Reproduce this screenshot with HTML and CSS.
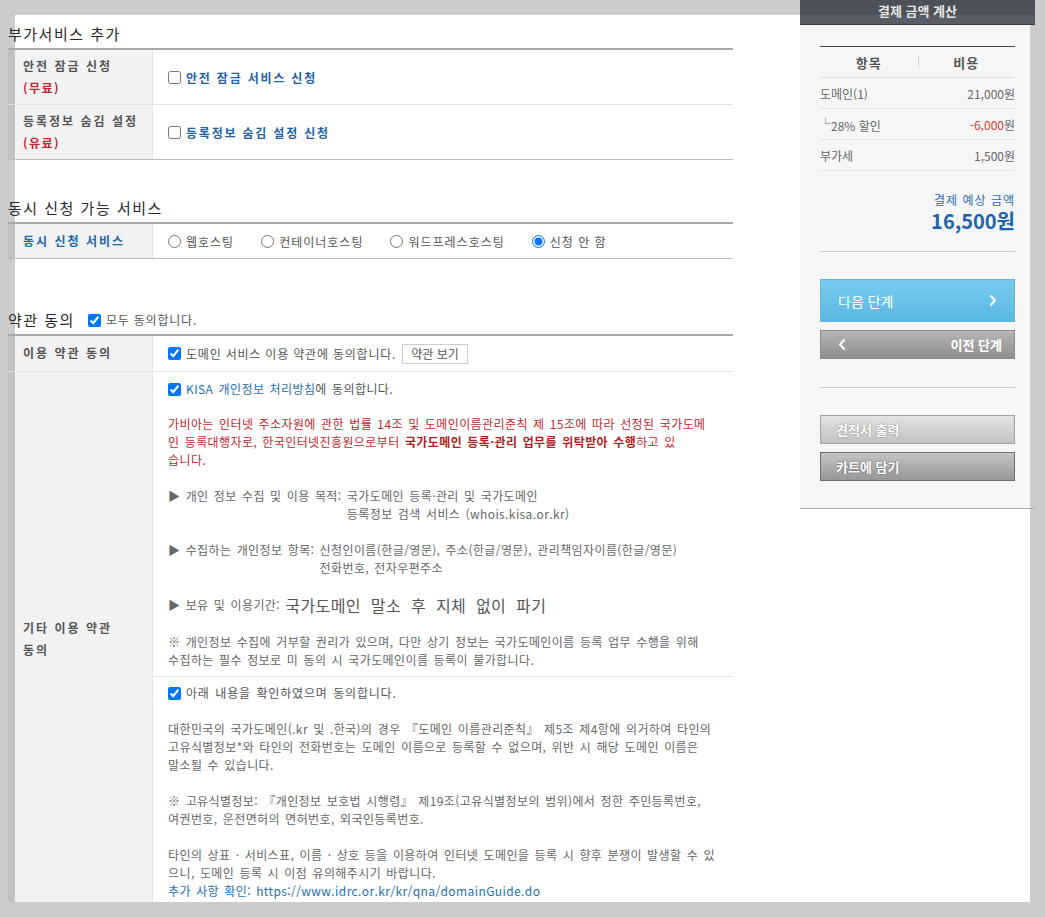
FILE: index.html
```html
<!DOCTYPE html>
<html lang="ko">
<head>
    <meta charset="utf-8">
    <title>도메인 신청 - 부가서비스 / 약관 동의</title>
<link rel="stylesheet" href="styles.css">
</head>
<body>
  <div class="page">
    <div class="content">

      <h3 class="sec-title">부가서비스 추가</h3>
      <div class="tbl">
        <div class="row">
          <div class="th th-2line"><span>안전 잠금 신청<br><em>(무료)</em></span></div>
          <div class="td"><label class="opt"><input type="checkbox">안전 잠금 서비스 신청</label></div>
        </div>
        <div class="row">
          <div class="th th-2line"><span>등록정보 숨김 설정<br><em>(유료)</em></span></div>
          <div class="td"><label class="opt"><input type="checkbox">등록정보 숨김 설정 신청</label></div>
        </div>
      </div>

      <h3 class="sec-title sec-2">동시 신청 가능 서비스</h3>
      <div class="tbl">
        <div class="row">
          <div class="th th-blue"><span>동시 신청 서비스</span></div>
          <div class="td">
            <label class="radio"><input type="radio" name="host">웹호스팅</label>
            <label class="radio"><input type="radio" name="host">컨테이너호스팅</label>
            <label class="radio"><input type="radio" name="host">워드프레스호스팅</label>
            <label class="radio"><input type="radio" name="host" checked>신청 안 함</label>
          </div>
        </div>
      </div>

      <h3 class="sec-title sec-3">약관 동의 <label class="all"><input type="checkbox" checked>모두 동의합니다.</label></h3>
      <div class="tbl tbl-last">
        <div class="row">
          <div class="th th-row1"><span>이용 약관 동의</span></div>
          <div class="td">
            <label class="chk"><input type="checkbox" checked>도메인 서비스 이용 약관에 동의합니다.</label>
            <button type="button" class="btn-view">약관 보기</button>
          </div>
        </div>
        <div class="row">
          <div class="th"><span>기타 이용 약관<br>동의</span></div>
          <div class="td terms">
            <div class="terms-block">
              <label class="chk chk-kisa"><input type="checkbox" checked><span><a class="link" href="#">KISA 개인정보 처리방침</a>에 동의합니다.</span></label>
              <p class="notice">가비아는 인터넷 주소자원에 관한 법률 14조 및 도메인이름관리준칙 제 15조에 따라 선정된 국가도메<br>인 등록대행자로, 한국인터넷진흥원으로부터 <b>국가도메인 등록·관리 업무를 위탁받아 수행</b>하고 있<br>습니다.</p>
              <div class="item"><span class="key">▶ 개인 정보 수집 및 이용 목적:&nbsp;</span><span class="val">국가도메인 등록·관리 및 국가도메인<br>등록정보 검색 서비스 (whois.kisa.or.kr)</span></div>
              <div class="item"><span class="key">▶ 수집하는 개인정보 항목:&nbsp;</span><span class="val">신청인이름(한글/영문), 주소(한글/영문), 관리책임자이름(한글/영문)<br>전화번호, 전자우편주소</span></div>
              <div class="item item-big"><span class="key">▶ 보유 및 이용기간:&nbsp;</span><span class="big">국가도메인 말소 후 지체 없이 파기</span></div>
              <p>※ 개인정보 수집에 거부할 권리가 있으며, 다만 상기 정보는 국가도메인이름 등록 업무 수행을 위해<br>수집하는 필수 정보로 미 동의 시 국가도메인이름 등록이 불가합니다.</p>
            </div>
            <div class="terms-block">
              <label class="chk"><input type="checkbox" checked>아래 내용을 확인하였으며 동의합니다.</label>
              <p>대한민국의 국가도메인(.kr 및 .한국)의 경우 『도메인 이름관리준칙』 제5조 제4항에 의거하여 타인의<br>고유식별정보*와 타인의 전화번호는 도메인 이름으로 등록할 수 없으며, 위반 시 해당 도메인 이름은<br>말소될 수 있습니다.</p>
              <p>※ 고유식별정보: 『개인정보 보호법 시행령』 제19조(고유식별정보의 범위)에서 정한 주민등록번호,<br>여권번호, 운전면허의 면허번호, 외국인등록번호.</p>
              <p>타인의 상표 · 서비스표, 이름 · 상호 등을 이용하여 인터넷 도메인을 등록 시 향후 분쟁이 발생할 수 있<br>으니, 도메인 등록 시 이점 유의해주시기 바랍니다.<br><a class="link" href="#">추가 사항 확인: https://www.idrc.or.kr/kr/qna/domainGuide.do</a></p>
            </div>
          </div>
        </div>
      </div>

    </div>
  </div>

  <!-- floating price box -->
  <aside class="calc">
    <div class="calc-head">결제 금액 계산</div>
    <div class="calc-body">
      <table class="calc-table">
        <thead>
          <tr><th>항목</th><th>비용</th></tr>
        </thead>
        <tbody>
          <tr><td>도메인(1)</td><td>21,000원</td></tr>
          <tr><td><span class="sub">└</span>28% 할인</td><td><span class="minus">-6,000</span>원</td></tr>
          <tr><td>부가세</td><td>1,500원</td></tr>
        </tbody>
      </table>
      <div class="total">
        <div class="total-label">결제 예상 금액</div>
        <div class="total-price">16,500원</div>
      </div>
      <div class="step-btns">
        <button type="button" class="btn btn-next">다음 단계
          <svg width="8" height="13" viewBox="0 0 8 13"><path d="M1.5 1.5 L6 6.5 L1.5 11.5" fill="none" stroke="#fff" stroke-width="2"/></svg>
        </button>
        <button type="button" class="btn btn-prev">
          <svg width="8" height="13" viewBox="0 0 8 13"><path d="M6.5 1.5 L2 6.5 L6.5 11.5" fill="none" stroke="#fff" stroke-width="2"/></svg>
          이전 단계
        </button>
      </div>
      <div class="etc-btns">
        <button type="button" class="btn btn-light">견적서 출력</button>
        <button type="button" class="btn btn-dark">카트에 담기</button>
      </div>
    </div>
  </aside>
</body>
</html>
```

FILE: styles.css
```css
body {
  margin: 0;
  background-color: #cccccc;
  font-family: "Noto Sans CJK KR", "Noto Sans", sans-serif;
  font-size: 12px;
  color: #666;
}
.page {
  margin: 15px 15px 0;
  height: 887px;
  padding-top: 9px;
  box-sizing: border-box;
  background-color: #fff;
}
.content {
  width: 725px;
  margin-left: -7px;
}

/* section titles */
.sec-title {
  margin: 0 0 4px;
  font-size: 15px;
  line-height: 20px;
  font-weight: normal;
  letter-spacing: 1.5px;
  color: #2a2a2a;
  display: flex;
  align-items: center;
}
.sec-2 {
  margin-top: 38px;
}
.sec-3 {
  margin-top: 51px;
}
.all {
  display: flex;
  align-items: center;
  margin-left: 13px;
  font-size: 12px;
  letter-spacing: 0.8px;
  color: #555;
}
.all input {
  margin: 0 5px 0 0;
}

/* form tables */
.tbl {
  border-top: 2px solid #a8a8a8;
  border-bottom: 1px solid #bbb;
}
.tbl-last {
  border-bottom: 2px solid #999;
}
.row {
  display: grid;
  grid-template-columns: 145px 1fr;
}
.row + .row {
  border-top: 1px solid #e3e3e3;
}
.th {
  display: flex;
  align-items: center;
  padding: 6px 8px 6px 15px;
  background-color: rgba(0, 0, 0, 0.05);
  border-right: 1px solid #e4e4e4;
  font-weight: bold;
  letter-spacing: 2px;
  line-height: 22px;
  color: #555;
}
.th-2line {
  padding-top: 5px;
  padding-bottom: 5px;
}
.th-row1 {
  padding-bottom: 7px;
}
.th em {
  font-style: normal;
  letter-spacing: 1.5px;
  color: #c0282d;
}
.th-blue {
  color: #2164a6;
}
.td {
  display: flex;
  align-items: center;
  padding: 0 15px;
}
.td input {
  margin: 0 5px 0 0;
}
.opt {
  display: flex;
  align-items: center;
  font-weight: bold;
  letter-spacing: 1.8px;
  color: #1f62a5;
}
.radio {
  display: flex;
  align-items: center;
  margin-right: 27px;
  letter-spacing: 1px;
  color: #555;
}
.chk {
  display: flex;
  align-items: center;
  line-height: 18px;
  letter-spacing: 0.8px;
  color: #555;
}
.chk-kisa {
  letter-spacing: 0.4px;
}
.btn-view {
  margin-left: 6px;
  height: 20px;
  padding: 0 8px;
  border: 1px solid #ccc;
  background-color: #fff;
  font-family: inherit;
  font-size: 12px;
  color: #555;
}
.link {
  color: #1f6fb5;
  text-decoration: none;
}

/* terms text */
.terms {
  display: block;
  padding: 0;
}
.terms-block {
  padding: 8px 15px 7px;
  line-height: 18px;
  letter-spacing: 0.4px;
  word-spacing: 1.5px;
  white-space: nowrap;
}
.terms-block + .terms-block {
  border-top: 1px solid #e3e3e3;
  padding: 7px 15px 5px;
}
.terms-block p {
  margin: 18px 0 0;
}
.terms-block p.notice {
  margin-top: 17px;
  color: #c0282d;
}
.notice b {
  color: #b01e22;
}
.item {
  display: flex;
  margin-top: 18px;
}
.item-big {
  align-items: center;
  line-height: 20px;
}
.big {
  font-size: 16px;
  color: #555;
  word-spacing: 5px;
}

/* price box */
.calc {
  position: absolute;
  top: 0;
  left: 800px;
  width: 235px;
}
.calc-head {
  height: 25px;
  line-height: 22px;
  text-align: center;
  font-size: 13px;
  font-weight: bold;
  color: #e6e6e6;
  background: linear-gradient(#4b5059 15px, #585d67 15px);
  border-bottom: 1px solid #3c4048;
  box-sizing: border-box;
}
.calc-body {
  padding: 21px 20px 27px;
  background: linear-gradient(to right, #f6f6f6 230px, transparent 230px);
  border-bottom: 1px solid #aaa;
}
.calc-table {
  width: 100%;
  border-collapse: collapse;
  border-top: 1px solid #444;
}
.calc-table th {
  height: 30px;
  width: 50%;
  padding: 0;
  font-size: 13px;
  letter-spacing: 1px;
  color: #555;
  border-bottom: 1px solid #ddd;
}
.calc-table th + th {
  background: linear-gradient(#ccc, #ccc) left center / 1px 10px no-repeat;
}
.calc-table td {
  height: 30px;
  padding: 0;
  border-bottom: 1px solid #e4e4e4;
  color: #666;
}
.calc-table td + td {
  text-align: right;
}
.sub {
  font-size: 11px;
  vertical-align: 3px;
}
.minus {
  color: #d23a35;
}
.total {
  padding: 20px 0 18px;
  text-align: right;
  border-bottom: 1px solid #ccc;
}
.total-label {
  line-height: 18px;
  color: #2a6fb5;
  letter-spacing: 1px;
}
.total-price {
  line-height: 24px;
  font-size: 20px;
  font-weight: bold;
  color: #1b63ad;
}
.step-btns {
  padding: 27px 0 28px;
  border-bottom: 1px solid #ccc;
}
.btn {
  display: flex;
  align-items: center;
  width: 100%;
  height: 29px;
  padding: 0 15px;
  font-family: inherit;
  font-size: 13px;
  font-weight: bold;
  color: #fff;
  cursor: pointer;
}
.btn-next {
  justify-content: space-between;
  height: 43px;
  padding: 0 17px;
  font-size: 14px;
  font-weight: normal;
  border: 1px solid #63b6de;
  background: linear-gradient(#77cbef, #5bb8e3);
}
.btn-prev {
  justify-content: space-between;
  margin-top: 8px;
  padding: 0 12px 0 17px;
  border: 1px solid #8a8a8a;
  background: linear-gradient(#b6b6b6, #8e8e8e);
}
.etc-btns {
  padding-top: 27px;
}
.btn-light {
  border: 1px solid #a3a3a3;
  background: linear-gradient(#e3e3e3, #c2c2c2);
  text-shadow: 0 0 2px #777;
}
.btn-dark {
  margin-top: 8px;
  border: 1px solid #6d6d6d;
  background: linear-gradient(#c4c4c4, #979797);
  text-shadow: 0 0 2px #555;
}
```
